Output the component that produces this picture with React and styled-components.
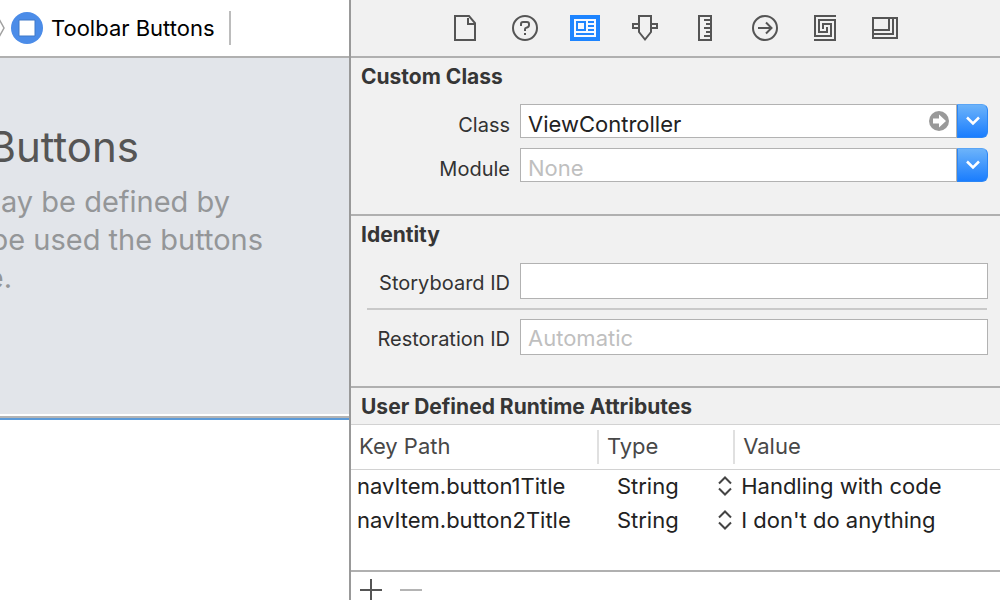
import React from "react";
import styled, { createGlobalStyle } from "styled-components";

const GlobalStyle = createGlobalStyle`
  *, *::before, *::after { box-sizing: border-box; }
  body {
    margin: 0;
    background: #fff;
    color: #222;
    font-family: Inter, "Liberation Sans", sans-serif;
    font-size: 20px;
  }
  button, input, select { font: inherit; color: inherit; margin: 0; padding: 0; border: 0; background: none; border-radius: 0; }
  h1, h2, p { margin: 0; }
`;

const Window = styled.div`
  display: flex;
  height: 100vh;
  overflow: hidden;
`;

const Editor = styled.main`
  flex: 349 1 0;
  min-width: 0;
  display: flex;
  flex-direction: column;
`;

const JumpBar = styled.nav`
  display: flex;
  align-items: center;
  flex: none;
  height: 58px;
  border-bottom: 2px solid #b0b0b0;
`;

const Crumb = styled.a`
  display: flex;
  align-items: center;
  gap: 8px;
  height: 34px;
  margin-left: 6px;
  padding-right: 14px;
  border-right: 2px solid #bcbcbc;
  color: #000;
  font-size: 22px;
  white-space: nowrap;
  text-decoration: none;
`;

const Canvas = styled.section`
  flex: none;
  height: 362px;
  padding-top: 61px;
  background: #e2e5ea;
  border-bottom: 2px solid #5c9ad8;
  box-shadow: inset 0 -2px #b4b4b4, inset 0 -4px #fff;
`;

const ClippedLine = styled.span`
  display: flex;
  justify-content: flex-end;
  width: ${(p) => p.$end}px;
  overflow: hidden;
  white-space: nowrap;
`;

const CanvasTitle = styled.h1`
  color: #555;
  font-size: 42px;
  font-weight: 400;
  line-height: 56px;
`;

const CanvasText = styled.p`
  margin-top: 8px;
  color: #949698;
  font-size: 29px;
  line-height: 38px;
`;

const Inspector = styled.aside`
  flex: 649 1 0;
  min-width: 0;
  display: flex;
  flex-direction: column;
  border-left: 2px solid #999;
  background: #f1f1f1;
`;

const TabBar = styled.div`
  display: flex;
  justify-content: center;
  flex: none;
  height: 58px;
  padding-right: 1px;
  border-bottom: 2px solid #b0b0b0;
`;

const Tab = styled.button`
  display: grid;
  place-items: center;
  width: 60px;
  color: ${(p) => (p.$active ? "#1d84ff" : "#555")};
`;

const Section = styled.section`
  flex: none;
  padding: 0 12px ${(p) => p.$bottom}px 10px;
  border-bottom: 2px solid #b0b0b0;
`;

const SectionTitle = styled.h2`
  height: ${(p) => p.$height}px;
  padding-top: 1px;
  color: #363636;
  font-size: 21px;
  font-weight: 700;
  line-height: 36px;
  white-space: nowrap;
`;

const Field = styled.div`
  display: grid;
  grid-template-columns: 149px minmax(0, 1fr);
  column-gap: 10px;
  height: ${(p) => p.$height}px;
`;

const FieldStack = styled.div`
  display: flex;
  flex-direction: column;
  gap: ${(p) => p.$gap}px;
`;

const Label = styled.label`
  align-self: center;
  padding-top: ${(p) => (p.$combo ? 8 : 4)}px;
  color: #333;
  text-align: right;
  white-space: nowrap;
`;

const TextInput = styled.input`
  flex: 1;
  width: 100%;
  min-width: 0;
  height: 100%;
  && {
    padding: ${(p) => (p.$combo ? 6 : 2)}px 7px 0;
    border: 1px solid #b2b2b2;
    background: #fff;
    font-size: 22px;
  }
  &::placeholder { color: #bfbfbf; opacity: 1; }
`;

const Combo = styled.div`
  display: flex;
  position: relative;
`;

const ComboButton = styled.button`
  display: grid;
  place-items: center;
  flex: none;
  width: 31px;
  && {
    border: 1px solid #2b86f5;
    border-top-color: #5aa5f5;
    border-radius: 0 6px 6px 0;
    background: linear-gradient(#6cb3fa, #1a7dfe);
  }
`;

const JumpButton = styled.button`
  position: absolute;
  right: 39px;
  top: 7px;
  width: 20px;
  height: 20px;
  svg { display: block; }
`;

const Divider = styled.hr`
  width: calc(100% - 7px);
  height: 2px;
  margin: 0 1px 0 6px;
  border: 0;
  background: #c9c9c9;
`;

const TableTitle = styled(SectionTitle)`
  flex: none;
  padding-left: 10px;
`;

const TableArea = styled.div`
  flex: none;
  height: 148px;
  border-top: 1px solid #d2d2d2;
  border-bottom: 2px solid #b0b0b0;
  background: #fff;
`;

const Table = styled.table`
  width: 100%;
  border-collapse: separate;
  border-spacing: 0;
  table-layout: fixed;
  font-size: 22px;
  white-space: nowrap;
`;

const Column = styled.col`
  width: ${(p) => p.$width};
`;

const HeadCell = styled.th`
  height: 45px;
  padding: 0;
  border-bottom: 1px solid #d2d2d2;
  color: #484848;
  font-weight: 400;
  text-align: left;
`;

const HeadLabel = styled.span`
  display: block;
  height: 34px;
  padding-left: 8px;
  border-right: ${(p) => (p.$last ? 0 : 2)}px solid #e0e0e0;
  line-height: 32px;
`;

const Cell = styled.td`
  height: 34px;
  padding: 0 0 2px 6px;
`;

const TypePicker = styled.div`
  display: flex;
  align-items: center;
  position: relative;
  padding-left: 8px;
  svg { position: absolute; right: 3px; pointer-events: none; }
`;

const TypeSelect = styled.select`
  appearance: none;
  width: 100%;
  && { padding-left: 4px; }
`;

const Footer = styled.div`
  display: flex;
  flex: 1;
  gap: 14px;
  padding-left: 7px;
  background: #fff;
`;

const FooterButton = styled.button`
  display: grid;
  place-items: center;
  flex: none;
  width: 26px;
  height: 36px;
  color: ${(p) => (p.disabled ? "#b4b4b4" : "#555")};
`;

const tabs = [
  ["File inspector", <path d="M5 3H19L25 10V27H5Z M18 5V11H24" />],
  ["Quick help", <>
    <circle cx="15" cy="15" r="12" />
    <path d="M11 13V11Q11 9 13 9H17Q19 9 19 11V12Q19 14 17 14.500Q15 15 15 16V18M14 21H16" />
  </>],
  ["Identity inspector", <>
    <path fill="currentColor" stroke="none" d="M0 2H30V28H0Z" />
    <path fill="#f4f8ff" stroke="none" d="M4 6H26V24H4Z" />
    <path d="M7 9H15V17H7Z M18 9H24M18 13H24M18 17H24M6 21H24" />
  </>],
  ["Attributes inspector", <path d="M9 3H21V19L15 26.500L9 19Z M9 11H3V15H9M21 11H27V15H21" />],
  ["Size inspector", <path d="M9 3H21V27H9Z M14 7H20M16 11H20M14 15H20M16 19H20M14 23H20" />],
  ["Connections inspector", <>
    <circle cx="15" cy="15" r="12" />
    <path d="M8 15H21M16 9.500L21.500 15L16 20.500" />
  </>],
  ["Bindings inspector", <path d="M26 3H5V23H21V11H13V16M4 27H25V7H9V19H17V14" />],
  ["View effects inspector", <path d="M3 5H27V25H3Z M19 5V17H3M23 5V21H3" />],
];

const attributes = [
  ["navItem.button1Title", "Handling with code"],
  ["navItem.button2Title", "I don't do anything"],
];

function ComboField({ id, label, jump, ...input }) {
  return (
    <Field $height={34}>
      <Label htmlFor={id} $combo>{label}</Label>
      <Combo>
        <TextInput id={id} $combo {...input} />
        {jump && (
          <JumpButton type="button" aria-label="Jump to class definition">
            <svg width="20" height="20" viewBox="0 0 20 20">
              <circle cx="10" cy="10" r="10" fill="#999" />
              <path d="M4 7.500H10V3.500L17 10L10 16.500V12.500H4Z" fill="#fff" />
            </svg>
          </JumpButton>
        )}
        <ComboButton type="button" aria-label={`Show ${label} options`}>
          <svg width="14" height="10" viewBox="0 0 14 10" fill="none" stroke="#fff" strokeWidth="2.500">
            <path d="M1 1.500L7 7.500L13 1.500" />
          </svg>
        </ComboButton>
      </Combo>
    </Field>
  );
}

function TextField({ id, label, placeholder }) {
  return (
    <Field $height={36}>
      <Label htmlFor={id}>{label}</Label>
      <TextInput id={id} placeholder={placeholder} />
    </Field>
  );
}

export default function App() {
  return (
    <Window>
      <GlobalStyle />
      <Editor>
        <JumpBar aria-label="Jump bar">
          <svg width="5" height="18" viewBox="0 0 5 18" fill="none" stroke="#a0a0a0" strokeWidth="1.500">
            <path d="M-1 0L4 9L-1 18" />
          </svg>
          <Crumb href="#toolbar-buttons">
            <svg width="32" height="32" viewBox="0 0 32 32">
              <circle cx="16" cy="16" r="16" fill="#4b8ce8" />
              <path d="M8 8H24V24H8Z" fill="#fff" stroke="#3f78c8" strokeWidth="1" />
            </svg>
            Toolbar Buttons
          </Crumb>
        </JumpBar>
        <Canvas>
          <CanvasTitle><ClippedLine $end={139}>Buttons</ClippedLine></CanvasTitle>
          <CanvasText>
            <ClippedLine $end={230}>may be defined by</ClippedLine>
            <ClippedLine $end={263}>be used the buttons</ClippedLine>
            <ClippedLine $end={12}>e.</ClippedLine>
          </CanvasText>
        </Canvas>
      </Editor>

      <Inspector>
        <TabBar>
          {tabs.map(([name, drawing]) => (
            <Tab key={name} type="button" aria-label={name} $active={name === "Identity inspector"}>
              <svg width="30" height="30" viewBox="0 0 30 30" fill="none" stroke="currentColor" strokeWidth="2">
                {drawing}
              </svg>
            </Tab>
          ))}
        </TabBar>

        <Section $bottom={32}>
          <SectionTitle $height={46}>Custom Class</SectionTitle>
          <FieldStack $gap={10}>
            <ComboField id="class" label="Class" defaultValue="ViewController" jump />
            <ComboField id="module" label="Module" placeholder="None" />
          </FieldStack>
        </Section>

        <Section $bottom={31}>
          <SectionTitle $height={47}>Identity</SectionTitle>
          <FieldStack $gap={9}>
            <TextField id="storyboard-id" label="Storyboard ID" />
            <Divider />
            <TextField id="restoration-id" label="Restoration ID" placeholder="Automatic" />
          </FieldStack>
        </Section>

        <TableTitle $height={36}>User Defined Runtime Attributes</TableTitle>
        <TableArea>
          <Table>
            <colgroup>
              <Column $width="38.2%" />
              <Column $width="21%" />
              <Column />
            </colgroup>
            <thead>
              <tr>
                <HeadCell><HeadLabel>Key Path</HeadLabel></HeadCell>
                <HeadCell><HeadLabel>Type</HeadLabel></HeadCell>
                <HeadCell><HeadLabel $last>Value</HeadLabel></HeadCell>
              </tr>
            </thead>
            <tbody>
              {attributes.map(([keyPath, value]) => (
                <tr key={keyPath}>
                  <Cell>{keyPath}</Cell>
                  <Cell>
                    <TypePicker>
                      <TypeSelect aria-label={`Type of ${keyPath}`} defaultValue="String">
                        <option>String</option>
                      </TypeSelect>
                      <svg width="14" height="20" viewBox="0 0 14 20" fill="none" stroke="#444" strokeWidth="2">
                        <path d="M1 7.500L7 1.500L13 7.500M1 12.500L7 18.500L13 12.500" />
                      </svg>
                    </TypePicker>
                  </Cell>
                  <Cell>{value}</Cell>
                </tr>
              ))}
            </tbody>
          </Table>
        </TableArea>
        <Footer>
          <FooterButton type="button" aria-label="Add attribute">
            <svg width="22" height="22" viewBox="0 0 22 22" stroke="currentColor" strokeWidth="2">
              <path d="M0 11H22M11 0V22" />
            </svg>
          </FooterButton>
          <FooterButton type="button" aria-label="Remove attribute" disabled>
            <svg width="22" height="22" viewBox="0 0 22 22" stroke="currentColor" strokeWidth="2">
              <path d="M0 11H22" />
            </svg>
          </FooterButton>
        </Footer>
      </Inspector>
    </Window>
  );
}
